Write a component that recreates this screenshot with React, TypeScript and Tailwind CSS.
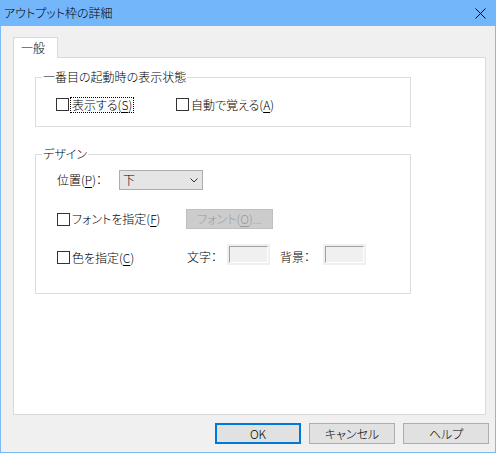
import React from 'react';

const font = "[font-family:'Noto_Sans_CJK_JP','Noto_Sans',sans-serif] [font-feature-settings:'palt'] font-light";

const CheckBox: React.FC = () => (
  <span className="block w-[13px] h-[13px] shrink-0 border border-[#333333] bg-white" />
);

const Mnemonic: React.FC<{ k: string }> = ({ k }) => <span className="underline underline-offset-2">{k}</span>;

const GroupBox: React.FC<{ title: string; className: string; children: React.ReactNode }> = ({ title, className, children }) => (
  <div className={`relative border border-[#dcdcdc] ${className}`}>
    <span className="absolute -top-[9px] left-[6px] bg-white px-[1px] leading-[16px]">{title}</span>
    {children}
  </div>
);

const ColorBox: React.FC = () => (
  <div className="w-[43px] h-[21px] bg-[#f0f0f0] p-[2px]">
    <div className="w-full h-full border border-t-[#a0a0a0] border-l-[#a0a0a0] border-r-white border-b-white" />
  </div>
);

const DialogButton: React.FC<{ label: string; primary?: boolean }> = ({ label, primary }) => (
  <button
    className={`w-[86px] h-[21px] bg-[#e1e1e1] flex items-center justify-center leading-none ${
      primary ? 'border-2 border-[#0078d7]' : 'border border-[#adadad]'
    }`}
  >
    {label}
  </button>
);

const App: React.FC = () => {
  return (
    <div className={`w-[496px] h-[453px] flex flex-col bg-[#f0f0f0] border-x border-b border-[#80baf5] text-[12px] text-black ${font}`}>
      {/* title bar */}
      <div className="h-[26px] shrink-0 -mx-px bg-[#74b6fa] flex items-center justify-between pl-[4px] pr-[10px]">
        <span className="leading-none">アウトプット枠の詳細</span>
        <svg width="11" height="11" viewBox="0 0 11 11" className="mt-[1px]">
          <path d="M0.5 0.5 L10.5 10.5 M10.5 0.5 L0.5 10.5" stroke="#000" strokeWidth="1" />
        </svg>
      </div>

      {/* tab header */}
      <div className="mt-[11px] ml-[12px] flex">
        <div className="relative z-10 -mb-px w-[45px] h-[21px] bg-white border-x border-t border-[#d9d9d9] flex items-start pl-[7px] pt-[3px] leading-[14px]">
          一般
        </div>
      </div>

      {/* tab panel */}
      <div className="ml-[12px] w-[473px] h-[358px] bg-white border border-[#d9d9d9]">
        <GroupBox title="一番目の起動時の表示状態" className="ml-[21px] mt-[19px] w-[376px] h-[50px]">
          <div className="flex pl-[20px] pt-[19px]">
            <div className="w-[120px] h-[15px] flex items-center">
              <CheckBox />
              <span className="ml-[1px] px-[1px] border border-dotted border-black leading-[14px]">
                表示する(<Mnemonic k="S" />)
              </span>
            </div>
            <div className="h-[15px] flex items-center">
              <CheckBox />
              <span className="ml-[2px] leading-[14px]">
                自動で覚える(<Mnemonic k="A" />)
              </span>
            </div>
          </div>
        </GroupBox>

        <GroupBox title="デザイン" className="ml-[21px] mt-[27px] w-[376px] h-[140px]">
          <div className="flex flex-col pl-[21px]">
            {/* position */}
            <div className="mt-[15px] h-[20px] flex items-center">
              <span className="w-[62px] leading-[14px]">
                位置(<Mnemonic k="P" />)：
              </span>
              <div className="w-[84px] h-[20px] bg-[#e5e5e5] border border-[#acacac] flex items-center justify-between pl-[3px] pr-[4px]">
                <span className="leading-[14px]">下</span>
                <svg width="8" height="5" viewBox="0 0 8 5">
                  <path d="M0.5 0.5 L4 4 L7.5 0.5" stroke="#333" strokeWidth="1" fill="none" />
                </svg>
              </div>
            </div>

            {/* font */}
            <div className="mt-[19px] h-[20px] flex items-center">
              <div className="w-[129px] flex items-center">
                <CheckBox />
                <span className="ml-[2px] leading-[14px]">
                  フォントを指定(<Mnemonic k="F" />)
                </span>
              </div>
              <div className="w-[87px] h-[20px] bg-[#cccccc] border border-[#bfbfbf] text-[#9a9a9a] flex items-center justify-center leading-none">
                フォント(<Mnemonic k="O" />)...
              </div>
            </div>

            {/* colour */}
            <div className="mt-[15px] h-[21px] flex items-start">
              <div className="mt-[6px] w-[130px] h-[15px] flex items-center">
                <CheckBox />
                <span className="ml-[2px] leading-[14px]">
                  色を指定(<Mnemonic k="C" />)
                </span>
              </div>
              <span className="mt-[6px] w-[40px] leading-[14px]">文字：</span>
              <ColorBox />
              <span className="mt-[6px] ml-[10px] w-[43px] leading-[14px]">背景：</span>
              <ColorBox />
            </div>
          </div>
        </GroupBox>
      </div>

      {/* buttons */}
      <div className="mt-[8px] flex justify-end gap-[8px] pr-[6px]">
        <DialogButton label="OK" primary />
        <DialogButton label="キャンセル" />
        <DialogButton label="ヘルプ" />
      </div>
    </div>
  );
};

export default App;
